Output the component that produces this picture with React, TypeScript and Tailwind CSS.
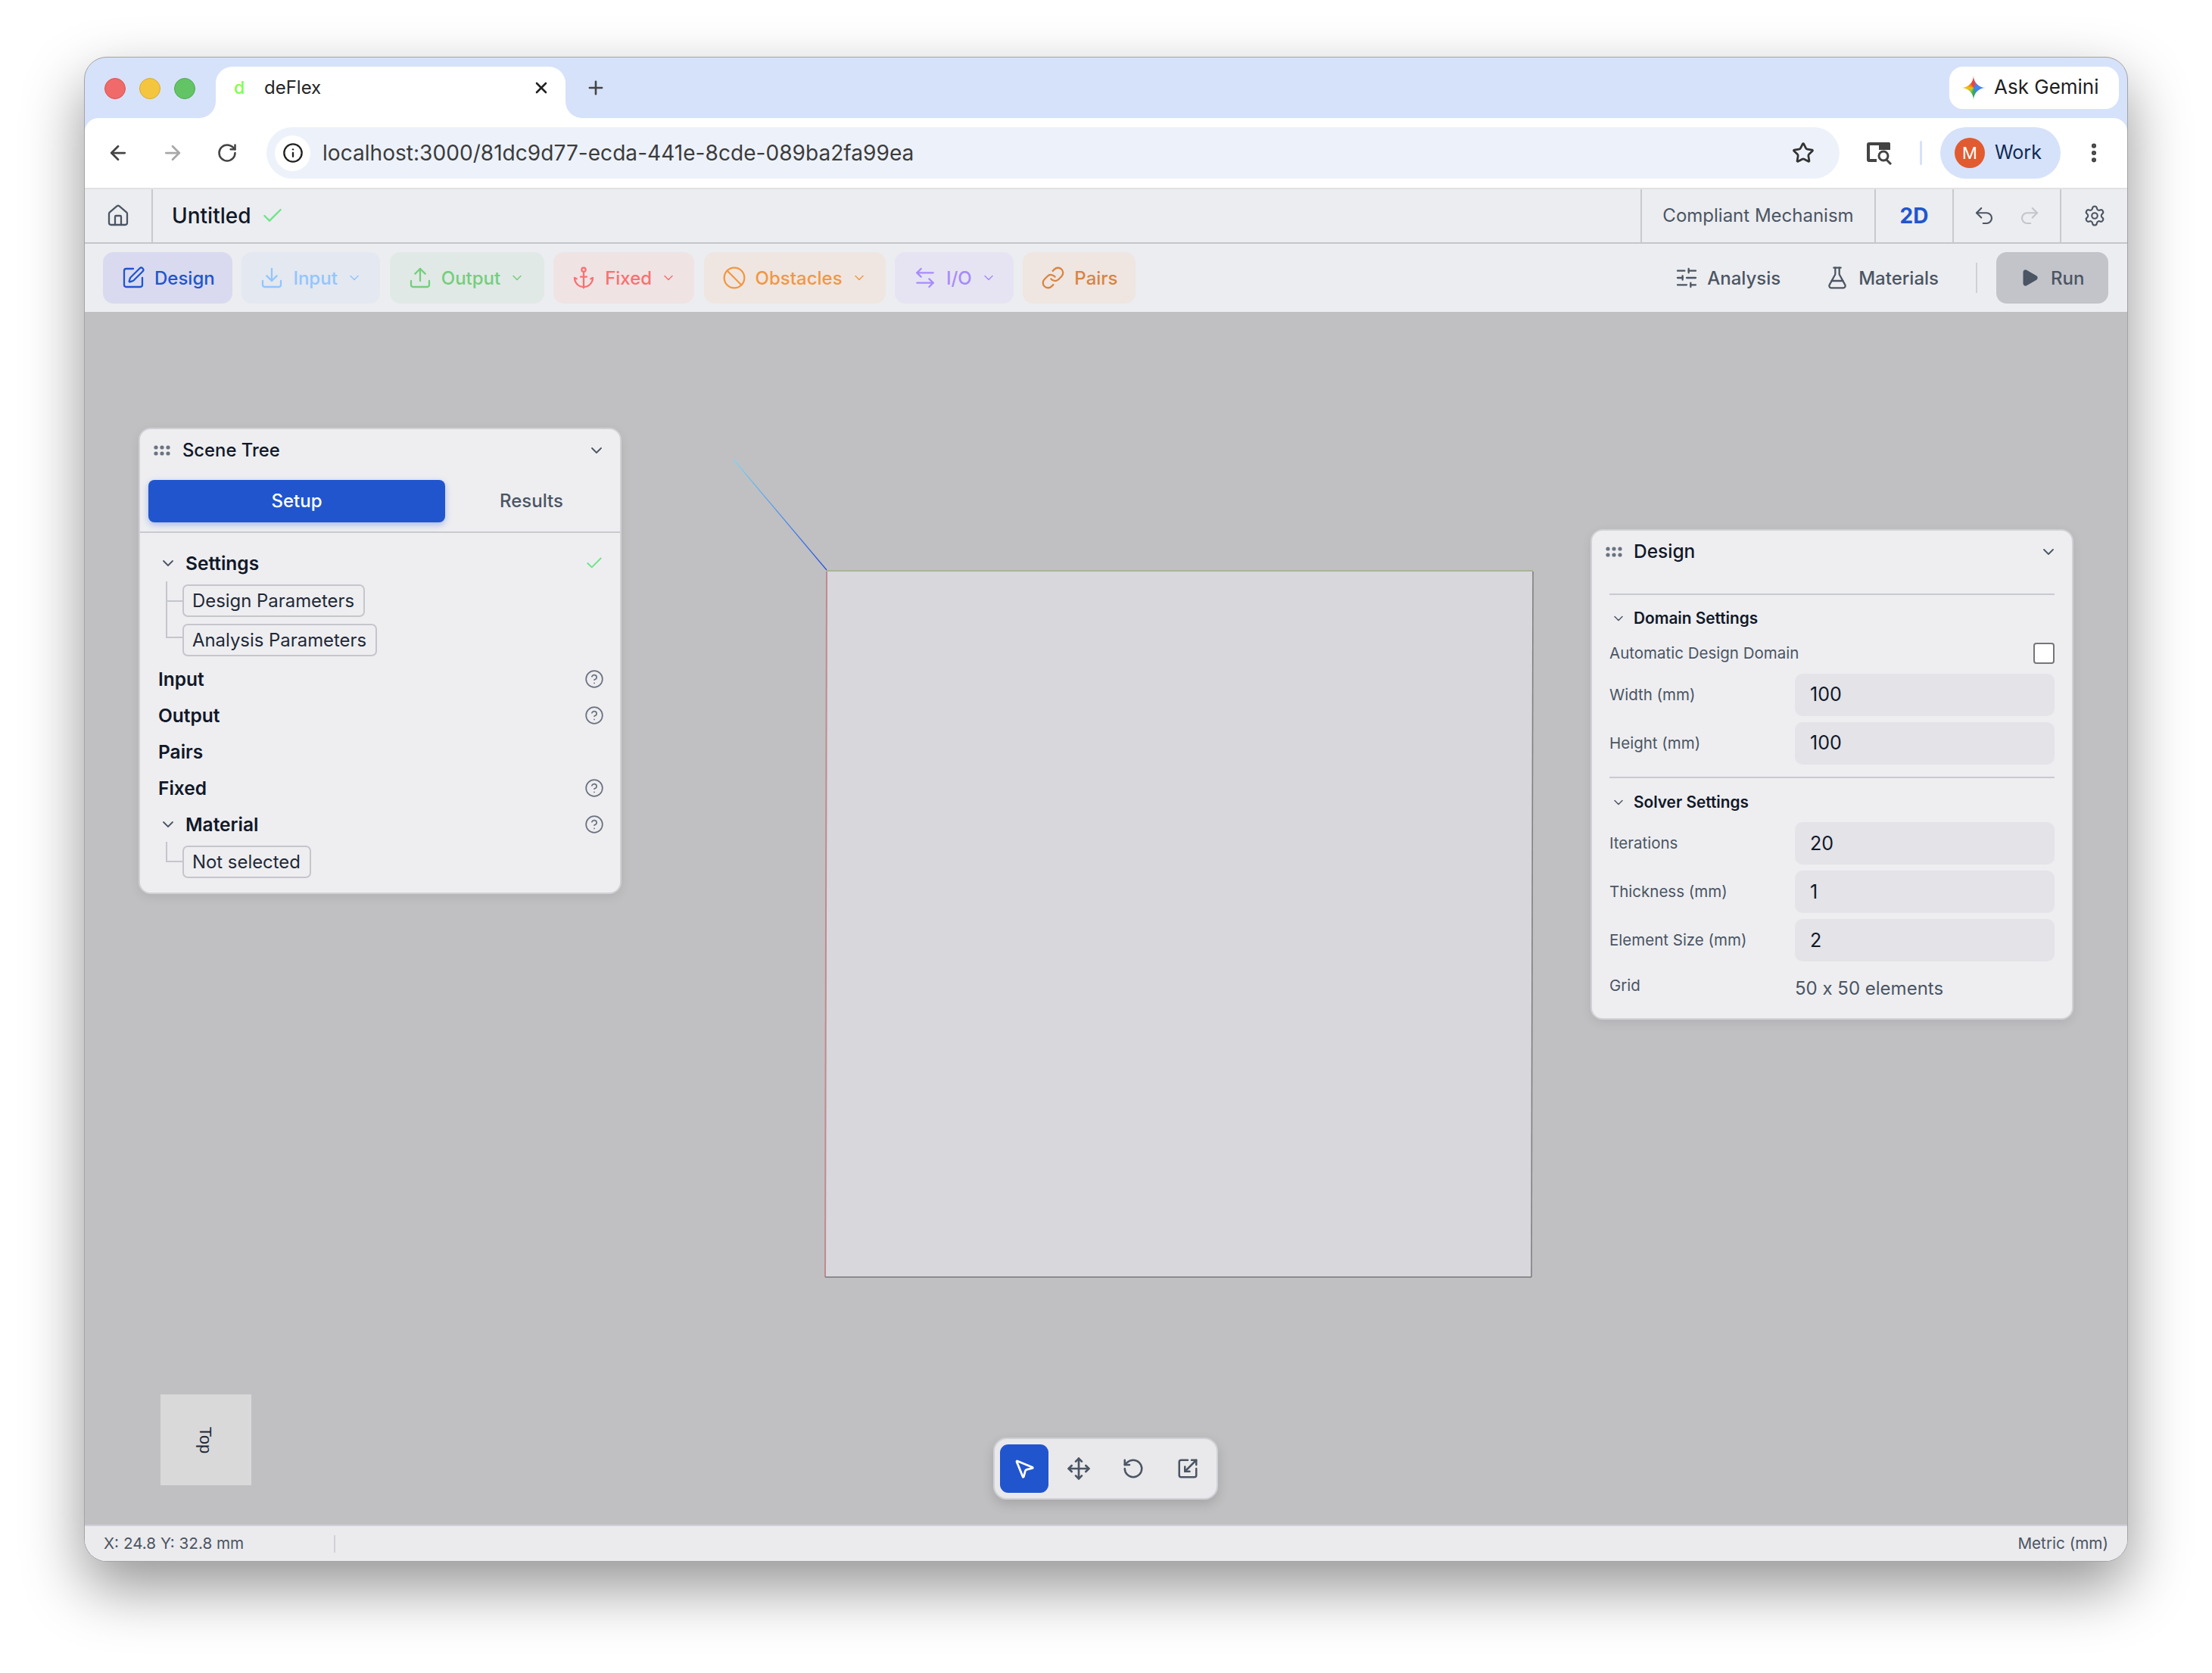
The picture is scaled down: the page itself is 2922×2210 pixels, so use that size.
import React from "react";
import {
  ArrowLeft, ArrowRight, RotateCw, Info, Star, X, Plus, House, Check, Undo2, Redo2, Settings, SquarePen, Download, Upload, Anchor, Ban,
  ArrowLeftRight, Link, ChevronDown, SlidersHorizontal, FlaskConical, Play, CircleHelp, Move, RotateCcw, Scaling, MousePointer2, EllipsisVertical,
} from "lucide-react";

function Grip() {
  return (
    <svg width="22" height="14" viewBox="0 0 22 14" className="shrink-0">
      {[3, 11, 19].map((x) => [3, 11].map((y) => <circle key={x + "-" + y} cx={x} cy={y} r="2.6" fill="#6b7280" />))}
    </svg>
  );
}

function Spark() {
  return (
    <div className="w-[32px] h-[32px] -ml-[1px] -mr-[1px] shrink-0 bg-[conic-gradient(#e5484d_0deg,#4285f4_60deg,#4285f4_130deg,#34a853_180deg,#9ccc4a_225deg,#fbbc04_270deg,#ea4335_345deg)] [clip-path:path('M16_0C16_8.8_23.2_16_32_16C23.2_16_16_23.2_16_32C16_23.2_8.8_16_0_16C8.8_16_16_8.8_16_0Z')]" />
  );
}

function TabSearch() {
  return (
    <svg width="36" height="32" viewBox="0 0 36 32" className="shrink-0">
      <path d="M2 5a3 3 0 0 1 3-3H30a3 3 0 0 1 3 3V12H29V6H6V24H15V28H5a3 3 0 0 1-3-3Z" fill="#444" />
      <path d="M18 2H31a2 2 0 0 1 2 2V12H18Z" fill="#444" />
      <circle cx="24" cy="20" r="6" fill="none" stroke="#444" strokeWidth="3" />
      <path d="M28 25L34 31" stroke="#444" strokeWidth="3" />
    </svg>
  );
}

const tools = [
  { label: "Design", Icon: SquarePen, w: "w-[171px]", bg: "bg-[#d9daef]", fg: "text-[#2155ce]", chevron: false },
  { label: "Input", Icon: Download, w: "w-[183px]", bg: "bg-[#e3e8f1]", fg: "text-[#93c5fd]", chevron: true },
  { label: "Output", Icon: Upload, w: "w-[204px]", bg: "bg-[#e1e9e6]", fg: "text-[#74ce7c]", chevron: true },
  { label: "Fixed", Icon: Anchor, w: "w-[186px]", bg: "bg-[#efe3e4]", fg: "text-[#f87171]", chevron: true },
  { label: "Obstacles", Icon: Ban, w: "w-[240px]", bg: "bg-[#efe6e1]", fg: "text-[#f29743]", chevron: true },
  { label: "I/O", Icon: ArrowLeftRight, w: "w-[157px]", bg: "bg-[#e6e4f2]", fg: "text-[#a78bfa]", chevron: true },
  { label: "Pairs", Icon: Link, w: "w-[149px]", bg: "bg-[#efe5e1]", fg: "text-[#d98440]", chevron: false },
];

function Chip({ children }: { children: React.ReactNode }) {
  return (
    <div className="h-[43px] pl-[11px] pr-[12px] flex items-center w-fit border-2 border-[#c5c6cc] rounded-[7px] text-[23.9px] text-[#1f2937]">{children}</div>
  );
}

function TreeRow({ label, help, expanded, check }: { label: string; help?: boolean; expanded?: boolean; check?: boolean }) {
  return (
    <div className="h-[48px] flex items-center justify-between pl-[24px] pr-[21px]">
      <div className="flex items-center">
        {expanded && <ChevronDown size={24} strokeWidth={1.8} className="text-[#4b5563] ml-[1px] mr-[11px]" />}
        <span className="text-[24.5px] font-semibold text-[#111827]">{label}</span>
      </div>
      {help && <CircleHelp size={26} strokeWidth={1.6} className="text-[#6b7280]" />}
      {check && <Check size={26} strokeWidth={1.8} className="text-[#6ee48a]" />}
    </div>
  );
}

function Field({ label, value }: { label: string; value: string }) {
  return (
    <div className="h-[56px] flex items-center">
      <div className="w-[245px] text-[20.5px] text-[#4b5563]">{label}</div>
      <div className="flex-1 h-full rounded-[10px] bg-[#e3e3e8] flex items-center pl-[20px] text-[25px] text-[#111827]">{value}</div>
    </div>
  );
}

function SectionTitle({ label }: { label: string }) {
  return (
    <div className="flex items-center">
      <ChevronDown size={20} strokeWidth={1.8} className="text-[#4b5563] mr-[10px] ml-[2px]" />
      <span className="text-[20.8px] font-semibold text-[#111827]">{label}</span>
    </div>
  );
}

export default function App() {
  return (
    <div className="w-[2922px] h-[2210px] bg-white pt-[75px] pl-[111px] font-['Inter',sans-serif] overflow-hidden">
      <div className="w-[2700px] h-[1988px] rounded-[30px] overflow-hidden bg-[#d6e2f9] flex flex-col border border-[#a3a3a6] shadow-[0_34px_80px_rgba(0,0,0,0.42)]">
        {/* tab strip */}
        <div className="h-[80px] shrink-0 flex items-end pl-[173px] pr-[11px] relative">
          <div className="absolute left-[26px] top-[27px] flex gap-[18px]">
            <div className="w-[28px] h-[28px] rounded-full bg-[#ef6a68] border border-[#d9534f]" />
            <div className="w-[28px] h-[28px] rounded-full bg-[#f4c63f] border border-[#dba92c]" />
            <div className="w-[28px] h-[28px] rounded-full bg-[#62c465] border border-[#4eaa52]" />
          </div>
          <div className="w-[462px] h-[68px] bg-white rounded-t-[22px] relative flex items-center pl-[24px] pr-[20px] pb-[12px]">
            <div className="absolute left-[-22px] bottom-0 w-[22px] h-[22px] bg-white">
              <div className="w-full h-full bg-[#d6e2f9] rounded-br-[22px]" />
            </div>
            <div className="absolute right-[-22px] bottom-0 w-[22px] h-[22px] bg-white">
              <div className="w-full h-full bg-[#d6e2f9] rounded-bl-[22px]" />
            </div>
            <span className="text-[23px] text-[#7dff4a] font-medium w-[40px]">d</span>
            <span className="text-[24px] text-[#262626] flex-1">deFlex</span>
            <X size={24} strokeWidth={2.6} className="text-[#222]" />
          </div>
          <Plus size={28} strokeWidth={2.2} className="text-[#444] ml-[26px] mb-[26px]" />
          <div className="ml-auto w-[224px] h-[56px] mb-[12px] bg-white rounded-[18px] flex items-center pl-[17px] gap-[12px]">
            <Spark />
            <span className="text-[26px] text-[#1f1f1f] leading-[30px] -mt-[2px]">Ask Gemini</span>
          </div>
        </div>
        {/* address row */}
        <div className="h-[92px] shrink-0 bg-white rounded-t-[18px] flex items-center pl-[29px]">
          <ArrowLeft size={30} strokeWidth={2.2} className="text-[#444] shrink-0" />
          <ArrowRight size={30} strokeWidth={2.2} className="text-[#a8a8a8] shrink-0 ml-[42px]" />
          <RotateCw size={28} strokeWidth={2.2} className="text-[#444] shrink-0 ml-[43px]" />
          <div className="w-[2078px] h-[68px] ml-[38px] rounded-full bg-[#edf2fa] flex items-center pl-[11px] pr-[33px]">
            <div className="w-[47px] h-[47px] rounded-full bg-white flex items-center justify-center shrink-0">
              <Info size={28} strokeWidth={2} className="text-[#222]" />
            </div>
            <span className="ml-[16px] text-[28.1px] text-[#3c3c3c] flex-1">localhost:3000/81dc9d77-ecda-441e-8cde-089ba2fa99ea</span>
            <Star size={30} strokeWidth={2.2} className="text-[#333]" />
          </div>
          <div className="ml-[34px]"><TabSearch /></div>
          <div className="w-[3px] h-[32px] rounded-full bg-[#d6e2f9] ml-[36px]" />
          <div className="ml-[24px] w-[159px] h-[68px] rounded-full bg-[#d6e2f9] flex items-center pl-[19px] shrink-0">
            <div className="w-[40px] h-[40px] rounded-full bg-[#e25a2f] text-white flex items-center justify-center text-[22px]">M</div>
            <span className="ml-[13px] text-[25px] text-[#0f2a55]">Work</span>
          </div>
          <EllipsisVertical size={32} strokeWidth={2.6} className="text-[#444] ml-[28px] shrink-0" />
        </div>
        {/* app body */}
        <div className="flex-1 min-h-0 flex flex-col bg-[#ecedf0]">
          <div className="h-[74px] shrink-0 border-t-2 border-b-2 border-t-[#e2e2e4] border-b-[#c5c6cc] flex items-stretch">
            <div className="w-[90px] border-r-2 border-[#c9cacf] flex items-center justify-center">
              <House size={32} strokeWidth={1.7} className="text-[#4b5563]" />
            </div>
            <div className="flex items-center pl-[25px] gap-[12px]">
              <span className="text-[28px] font-medium text-[#111827]">Untitled</span>
              <Check size={32} strokeWidth={1.8} className="text-[#6ee48a]" />
            </div>
            <div className="ml-auto flex items-stretch">
              <div className="w-[309px] border-l-2 border-[#c9cacf] flex items-center justify-center text-[24px] text-[#4b5563]">Compliant Mechanism</div>
              <div className="w-[103px] border-l-2 border-[#c9cacf] flex items-center justify-center text-[28px] font-bold text-[#2155ce]">2D</div>
              <div className="w-[142px] border-l-2 border-[#c9cacf] flex items-center justify-center gap-[30px]">
                <Undo2 size={30} strokeWidth={1.7} className="text-[#4b5563]" />
                <Redo2 size={30} strokeWidth={1.7} className="text-[#c3c5cc]" />
              </div>
              <div className="w-[89px] border-l-2 border-[#c9cacf] flex items-center justify-center">
                <Settings size={30} strokeWidth={1.7} className="text-[#4b5563]" />
              </div>
            </div>
          </div>
          <div className="h-[90px] shrink-0 flex items-center pl-[24px] pr-[25px] gap-[12.4px]">
            {tools.map(({ label, Icon, w, bg, fg, chevron }) => (
              <div key={label} className={`h-[68px] rounded-[14px] flex items-center pl-[24px] gap-[12px] ${w} ${bg} ${fg}`}>
                <Icon size={32} strokeWidth={1.7} />
                <span className="text-[24px] font-medium mt-[1px]">{label}</span>
                {chevron && <ChevronDown size={20} strokeWidth={1.8} />}
              </div>
            ))}
            <div className="ml-auto flex items-center text-[24px] font-medium text-[#4b5563]">
              <SlidersHorizontal size={32} strokeWidth={1.7} />
              <span className="ml-[11px] mt-[1px]">Analysis</span>
              <FlaskConical size={32} strokeWidth={1.7} className="ml-[59px]" />
              <span className="ml-[12px] mt-[1px]">Materials</span>
              <div className="w-[2px] h-[40px] bg-[#cfd0d5] ml-[49px]" />
              <div className="ml-[25px] w-[148px] h-[68px] rounded-[14px] bg-[#c3c4ca] flex items-center pl-[31px] gap-[15px]">
                <Play size={26} strokeWidth={1.7} fill="#4b5563" />
                <span className="mt-[1px]">Run</span>
              </div>
            </div>
          </div>
          {/* canvas */}
          <div className="flex-1 min-h-0 relative bg-[#c0c0c2]">
            <svg className="absolute inset-0" width="2698" height="1602" viewBox="112 412 2698 1602">
              <defs>
                <linearGradient id="axis" x1="969" y1="607" x2="1092" y2="753" gradientUnits="userSpaceOnUse">
                  <stop offset="0" stopColor="#7fd6ef" />
                  <stop offset="1" stopColor="#2a4fe0" />
                </linearGradient>
              </defs>
              <polygon points="1092,755 2025,755 2023,1687 1090,1687" fill="#d7d7dc" />
              <line x1="1092" y1="754" x2="2025" y2="754" stroke="#a7b596" strokeWidth="2" />
              <line x1="1092" y1="755" x2="1090" y2="1687" stroke="#c08a8c" strokeWidth="2" />
              <line x1="2025" y1="755" x2="2023" y2="1687" stroke="#808084" strokeWidth="1.6" />
              <line x1="1090" y1="1687" x2="2023" y2="1687" stroke="#77777b" strokeWidth="1.6" />
              <line x1="969" y1="607" x2="1092" y2="753" stroke="url(#axis)" strokeWidth="1.3" />
            </svg>

            <div className="absolute left-[71px] top-[153px] w-[638px] h-[616px] bg-[#eeeef1] rounded-[16px] border-2 border-[#d0d1d6] shadow-[0_4px_14px_rgba(0,0,0,0.08)]">
              <div className="h-[56px] flex items-center pl-[18px] pr-[19px] gap-[16px]">
                <Grip />
                <span className="text-[23.8px] font-medium text-[#111827] flex-1">Scene Tree</span>
                <ChevronDown size={24} strokeWidth={1.8} className="text-[#4b5563]" />
              </div>
              <div className="h-[56px] mt-[11px] ml-[11px] flex items-center">
                <div className="w-[392px] h-full rounded-[8px] bg-[#2155ce] text-white text-[24px] font-medium flex items-center justify-center shadow-[0_3px_8px_rgba(33,85,206,0.35)]">Setup</div>
                <div className="w-[228px] text-center text-[24px] font-medium text-[#4b5563]">Results</div>
              </div>
              <div className="h-[2px] bg-[#c9cad0] mt-[12px]" />
              <div className="pt-[16px]">
                <TreeRow label="Settings" expanded check />
                <div className="relative pl-[56px] flex flex-col gap-[9px] mt-[4px] mb-[6px]">
                  <div className="absolute left-[34px] top-[-4px] w-[22px] h-[75px] border-l-2 border-b-2 border-[#c5c6cc]" />
                  <div className="absolute left-[34px] top-[21px] w-[22px] h-[2px] bg-[#c5c6cc]" />
                  <Chip>Design Parameters</Chip>
                  <Chip>Analysis Parameters</Chip>
                </div>
                <TreeRow label="Input" help />
                <TreeRow label="Output" help />
                <TreeRow label="Pairs" />
                <TreeRow label="Fixed" help />
                <TreeRow label="Material" help expanded />
                <div className="relative pl-[56px] mt-[4px]">
                  <div className="absolute left-[34px] top-[-5px] w-[22px] h-[27px] border-l-2 border-b-2 border-[#c5c6cc]" />
                  <Chip>Not selected</Chip>
                </div>
              </div>
            </div>

            <div className="absolute left-[1989px] top-[287px] w-[638px] h-[648px] bg-[#eeeef1] rounded-[16px] border-2 border-[#d0d1d6] shadow-[0_4px_14px_rgba(0,0,0,0.08)]">
              <div className="h-[55px] flex items-center pl-[18px] pr-[19px] gap-[15px]">
                <Grip />
                <span className="text-[24.5px] font-medium text-[#111827] flex-1">Design</span>
                <ChevronDown size={24} strokeWidth={1.8} className="text-[#4b5563]" />
              </div>
              <div className="px-[23px]">
                <div className="h-[2px] bg-[#c9cad0] mt-[28px]" />
                <div className="mt-[15px]"><SectionTitle label="Domain Settings" /></div>
                <div className="mt-[17px] h-[28px] flex items-center justify-between">
                  <span className="text-[20.5px] text-[#4b5563]">Automatic Design Domain</span>
                  <div className="w-[28px] h-[28px] rounded-[4px] bg-white border-2 border-[#767679]" />
                </div>
                <div className="mt-[13px] flex flex-col gap-[8px]">
                  <Field label="Width (mm)" value="100" />
                  <Field label="Height (mm)" value="100" />
                </div>
                <div className="h-[2px] bg-[#c9cad0] mt-[16px]" />
                <div className="mt-[16px]"><SectionTitle label="Solver Settings" /></div>
                <div className="mt-[11px] flex flex-col gap-[8px]">
                  <Field label="Iterations" value="20" />
                  <Field label="Thickness (mm)" value="1" />
                  <Field label="Element Size (mm)" value="2" />
                </div>
                <div className="mt-[16px] flex items-start">
                  <div className="w-[245px] text-[20.5px] text-[#4b5563] mt-[1px]">Grid</div>
                  <div className="text-[24px] text-[#4b5563] mt-[2px] [font-feature-settings:'calt'_0]">50 x 50 elements</div>
                </div>
              </div>
            </div>

            <div className="absolute left-[100px] top-[1430px] w-[120px] h-[120px] bg-[#d9d9da] flex items-center justify-center">
              <span className="rotate-90 text-[22px] text-[#1f2937] font-['Liberation_Sans',sans-serif]">Top</span>
            </div>

            <div className="absolute left-[1200px] top-[1487px] w-[297px] h-[82px] bg-[#e9e9ec] rounded-[18px] border-2 border-[#d0d1d6] shadow-[0_6px_16px_rgba(0,0,0,0.14)] flex items-center pl-[7px] gap-[8px] text-[#4b5563]">
              <div className="w-[64px] h-[64px] rounded-[11px] bg-[#2155ce] flex items-center justify-center text-white">
                <MousePointer2 size={30} strokeWidth={2.2} />
              </div>
              <div className="w-[64px] flex justify-center"><Move size={32} strokeWidth={2} /></div>
              <div className="w-[64px] flex justify-center"><RotateCcw size={30} strokeWidth={2} /></div>
              <div className="w-[64px] flex justify-center"><Scaling size={30} strokeWidth={2} /></div>
            </div>
          </div>
          {/* status */}
          <div className="h-[48px] shrink-0 border-t-2 border-[#cfd0d8] bg-[#ebebee] flex items-center pl-[25px] pr-[25px] text-[20.7px] text-[#4b5563]">
            <span className="w-[304px]">X: 24.8 Y: 32.8 mm</span>
            <div className="w-[2px] h-[23px] bg-[#d0d1d6]" />
            <span className="ml-auto">Metric (mm)</span>
          </div>
        </div>
      </div>
    </div>
  );
}
